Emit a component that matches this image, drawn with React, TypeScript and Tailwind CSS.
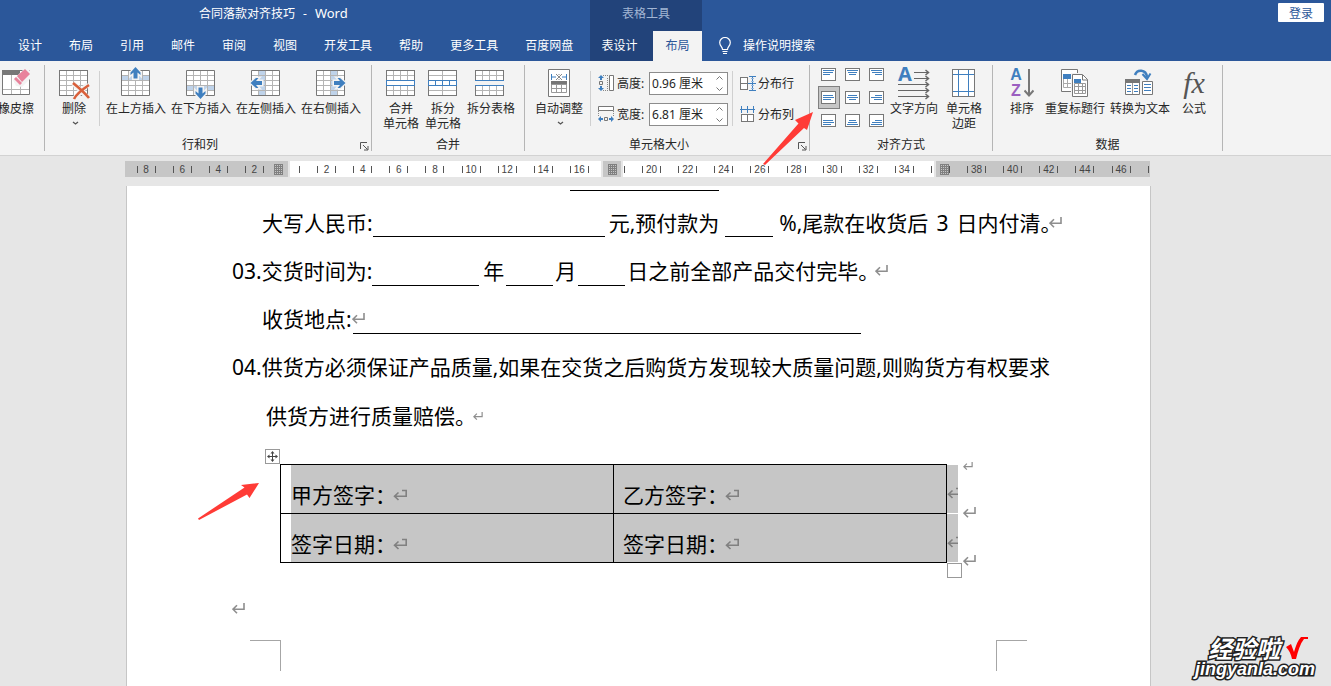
import React from "react";

const UI = "font-['Noto_Sans','Noto_Sans_CJK_SC',sans-serif]";

function Grid({ children }: { children?: React.ReactNode }) {
  return (
    <svg width="32" height="32" viewBox="1 0 32 32" fill="none" shapeRendering="crispEdges" className="overflow-visible">
      <rect x="2.5" y="3.5" width="28" height="25" fill="#fff" stroke="#777" />
      <path d="M9.5 4v24M16.5 4v24M23.5 4v24M3 8.5h27M3 13.5h27M3 18.5h27M3 23.5h27" stroke="#b4b4b4" />
      {children}
    </svg>
  );
}

const EraserIcon = () => (
  <svg width="32" height="32" viewBox="0 0 32 32" fill="none">
    <path d="M2.5 3.5h27v24h-27z" fill="#fff" stroke="#777" />
    <path d="M2 3h18v5H2z" fill="#777" />
    <path d="M11.5 8v19M20.5 16v11M3 22.5h26" stroke="#b4b4b4" />
    <path d="M13 13 26 0l8 8-12 12-6-1z" fill="#f3f3f3" />
    <path d="m17 9 8-7 5 5-8 8z" fill="#e8829b" />
    <path d="m16 10-2 2 6 6 2-2z" fill="#e8829b" />
  </svg>
);

const DeleteIcon = () => (
  <Grid>
    <g shapeRendering="auto">
      <path d="m16 16 17 17M31 17 17 32" stroke="#f3f3f3" strokeWidth="5" />
      <path d="M16 16c5 4 11 9 16 15M32 18c-6 4-12 8-15 14" stroke="#d9603b" strokeWidth="2.6" />
    </g>
  </Grid>
);

const InsertIcon = ({ dir }: { dir: "up" | "down" | "left" | "right" }) => {
  const band = { up: "M3 9h27v4H3z", down: "M3 19h27v4H3z", left: "M10 4h6v24h-6z", right: "M17 4h6v24h-6z" }[dir];
  const turn = {
    up: "translate(16.5 5.5)",
    down: "translate(16.5 26.5) rotate(180)",
    left: "translate(7 16) rotate(-90)",
    right: "translate(26 16) rotate(90)",
  }[dir];
  return (
    <svg width="32" height="32" viewBox="1 0 32 32" fill="none" className="overflow-visible">
      <path d="M2.5 3.5h28v25h-28z" fill="#fff" stroke="#777" />
      <path d={band} fill="#bfd3ea" />
      <path d="M9.5 4v24M16.5 4v24M23.5 4v24M3 8.5h27M3 13.5h27M3 18.5h27M3 23.5h27" stroke="#b4b4b4" />
      <g transform={turn}>
        <path d="M0-5 5 0v2.5L2-.5V6h-4V-.5L-5 2.500V0z" fill="#3f7fbf" stroke="#f3f3f3" strokeWidth="3" />
        <path d="M0-5.500 5 0v2.500L2 0v6h-4V0l-3 2.500V0z" fill="#3f7fbf" />
      </g>
    </svg>
  );
};

const MergeIcon = () => (
  <Grid>
    <path d="M2.5 13.5h28v5h-28z" fill="#fff" stroke="#3f7fbf" />
  </Grid>
);

const SplitCellIcon = () => (
  <svg width="32" height="32" viewBox="1 0 32 32" fill="none" shapeRendering="crispEdges">
    <path d="M2.5 3.5h28v25h-28z" fill="#fff" stroke="#777" />
    <path d="M16.5 4v24M3 8.5h27M3 23.5h27" stroke="#b4b4b4" />
    <path d="M2.5 13.5h28v5h-28zM9.5 13v5M16.5 13v5M23.5 13v5" fill="#fff" stroke="#3f7fbf" />
  </svg>
);

const SplitTableIcon = () => (
  <svg width="32" height="32" viewBox="2 0 32 32" fill="none" shapeRendering="crispEdges">
    <path d="M2.5 3.5h28v10h-28zM2.5 18.5h28v10h-28z" fill="#fff" stroke="#777" />
    <path d="M9.5 4v9M16.5 4v9M23.5 4v9M3 8.5h27M9.5 19v9M16.5 19v9M23.5 19v9M3 23.5h27" stroke="#b4b4b4" />
    <path d="M2 13.5h29M2 18.5h29" stroke="#3f7fbf" />
  </svg>
);

const AutoFitIcon = () => (
  <svg width="32" height="32" viewBox="0 0 32 32" fill="none">
    <path d="M5.5 2.5h21v27h-21z" fill="#fff" stroke="#777" />
    <path d="M8.5 7v6M23.5 7v6M9 10h4M19 10h4" stroke="#3f7fbf" />
    <path d="m13 7 6 6M19 7l-6 6M16 7v1M16 12v1" stroke="#888" />
    <path d="M8 14h16v4H8z" fill="#777" />
    <path d="M8.5 17.5h15v8h-15zM13.5 18v8M18.5 18v8M9 21.5h14" stroke="#999" />
  </svg>
);

const HeightIcon = () => (
  <svg width="17" height="17" viewBox="0 0 17 17" fill="none">
    <path d="M11.5.5h4v15h-4z" fill="#fff" stroke="#777" />
    <path d="M5 .5h6M5 15.5h6M9.5 3v11" stroke="#888" strokeDasharray="1 1" />
    <path d="M1.5 6.5h3v3h-3z" stroke="#777" />
    <path d="M3 0 6 3H4v2H2V3H0zM3 16l3-3H4v-2H2v2H0z" fill="#3f7fbf" />
  </svg>
);

const WidthIcon = () => (
  <svg width="17" height="17" viewBox="0 0 17 17" fill="none">
    <path d="M.5.5h15v4H.5z" fill="#fff" stroke="#777" />
    <path d="M.5 5v6M15.5 5v6" stroke="#888" strokeDasharray="1 1" />
    <path d="M6.5 11.5h3v3h-3z" stroke="#777" />
    <path d="m0 13 3-3v2h2v2H3v2zM16 13l-3-3v2h-2v2h2v2z" fill="#3f7fbf" />
  </svg>
);

const RowsIcon = () => (
  <svg width="17" height="17" viewBox="0 0 17 17" fill="none" shapeRendering="crispEdges">
    <path d="M.5 2.5h7v12H.5zM.5 8.5h7" fill="#fff" stroke="#777" />
    <path d="M9 1.5h7M8 8.5h8M9 15.5h7M12.5 2v13" stroke="#3f7fbf" />
    <path d="M11 3.5h3M11 6.5h3M11 10.5h3M11 13.5h3" stroke="#9bbbe0" />
  </svg>
);

const ColsIcon = () => (
  <svg width="17" height="17" viewBox="0 0 17 17" fill="none" shapeRendering="crispEdges">
    <path d="M1.5 8.5h12v7h-12zM7.5 8.5v7" fill="#fff" stroke="#777" />
    <path d="M1.5 0v7M7.5 0v7M13.5 0v7M0 3.5h15" stroke="#3f7fbf" />
  </svg>
);

const ALIGN_NAMES = [
  "靠上两端对齐", "靠上居中对齐", "靠上右对齐",
  "中部两端对齐", "水平居中", "中部右对齐",
  "靠下两端对齐", "靠下居中对齐", "靠下右对齐",
];

const ALIGN_LINES = [
  "M2 2.5h11M2 4.5h10M2 6.5h7", "M2 2.5h11M3 4.5h9M4 6.5h7", "M2 2.5h11M3 4.5h10M6 6.5h7",
  "M2 4.5h10M2 6.5h11M2 8.5h8", "M3 4.5h9M2 6.5h11M4 8.5h7", "M6 4.5h7M2 6.5h11M5 8.5h8",
  "M2 6.5h10M2 8.5h11M2 10.5h8", "M4 6.5h7M3 8.5h9M2 10.5h11", "M6 6.5h7M3 8.5h10M2 10.5h11",
];

const AlignIcon = ({ index }: { index: number }) => (
  <svg width="16" height="13" viewBox="0 0 16 13" fill="none" shapeRendering="crispEdges">
    <path d="M.5.5h14v12H.5z" fill="#fff" stroke="#777" />
    <path d={ALIGN_LINES[index]} stroke="#3f7fbf" />
  </svg>
);

const DirectionIcon = () => (
  <svg width="34" height="34" viewBox="0 0 34 34" fill="none" className="overflow-visible">
    <text x="1" y="15" fontSize="20" fontWeight="700" fill="#3f7fbf" fontFamily="Noto Sans, sans-serif">A</text>
    <path d="M17 6.5h14M17 12.5h14M1 18.5h30M1 24.5h30M1 30.5h30" stroke="#666" />
    <path d="m28.5 4 3 2.500-3 2.500M28.5 10l3 2.500-3 2.500M28.5 16l3 2.500-3 2.500M28.5 22l3 2.500-3 2.500M28.5 28l3 2.500-3 2.500" stroke="#666" strokeWidth="1.5" />
  </svg>
);

const MarginsIcon = () => (
  <svg width="32" height="32" viewBox="0 0 32 32" fill="none" shapeRendering="crispEdges">
    <path d="M4.5 2.5h22v27h-22z" fill="#fff" stroke="#777" />
    <path d="M10.5 3v26M20.5 3v26M5 7.5h21M5 24.5h21" stroke="#3f7fbf" />
  </svg>
);

const SortIcon = () => (
  <span className="flex items-center gap-0.5">
    <span className="flex w-3 flex-col items-center font-['Liberation_Sans',sans-serif] text-base font-bold leading-4">
      <span className="text-[#3f7fbf]">A</span>
      <span className="text-[#9b5fc0]">Z</span>
    </span>
    <svg width="10" height="32" viewBox="20 0 10 32" fill="none">
      <path d="M25 2v26" stroke="#777" strokeWidth="2" />
      <path d="m20.5 23.5 4.5 5 4.5-5" stroke="#777" strokeWidth="2" />
    </svg>
  </span>
);

const RepeatIcon = () => (
  <svg width="32" height="32" viewBox="0 0 32 32" fill="none">
    <path d="M2.5 2.5h16v22h-16z" fill="#fff" stroke="#777" />
    <path d="M4 7h8v5H4z" fill="#3f7fbf" />
    <path d="M4.5 12v8.5h8M4 16.5h8M8.5 12v8" stroke="#aaa" />
    <path d="M12 6h12l7 7v18H12z" fill="#f3f3f3" />
    <path d="M13.5 7.5h10l5 5v17h-15z" fill="#fff" stroke="#777" />
    <path d="M23.5 8v5h5" stroke="#777" />
    <path d="M15 12h7v4h-7z" fill="#3f7fbf" />
    <path d="M15.5 16.5h11v10h-11zM15 19.5h12M15 23.5h12M19.5 16v11M23.5 16v11" stroke="#999" />
  </svg>
);

const ConvertIcon = () => (
  <svg width="32" height="32" viewBox="1 0 32 32" fill="none">
    <path d="M2.5 13.5h14v14h-14z" fill="#fff" stroke="#777" />
    <path d="M2 12h15v4H2z" fill="#777" />
    <path d="M9.5 16v11" stroke="#999" />
    <path d="M4 18.5h4M4 21.5h4M4 24.5h4M11 18.5h4M11 21.5h4M11 24.5h4" stroke="#3f7fbf" />
    <path d="M19.5 14.5h10v13h-10z" fill="#fff" stroke="#777" />
    <path d="M21 17.5h7M21 20.5h7M21 23.5h7" stroke="#3f7fbf" />
    <path d="M12 8c2-6 11-6 12 2" stroke="#3f7fbf" strokeWidth="2.5" />
    <path d="m19.5 7 4.5 5 3.5-5.500" stroke="#3f7fbf" strokeWidth="2" />
  </svg>
);

const Caret = () => (
  <svg width="7" height="5" viewBox="0 0 7 5" fill="none" className="ml-[3px] mt-[5px]">
    <path d="m1 1 2.500 2L6 1" stroke="#555" strokeWidth="1.3" />
  </svg>
);

const Return = ({ box = false, small = false }: { box?: boolean; small?: boolean }) => (
  <svg
    width={small ? 10 : box ? 14 : 13}
    height={small ? 9 : 12}
    viewBox={box ? "0 0 14 12" : "0 0 13 12"}
    fill="none"
    aria-hidden="true"
    className="shrink-0"
  >
    {box ? (
      <path d="M5.500 3.500 1.500 7.200l4 3.800M1.500 7.200h11.700V1.500H9" stroke="#808080" strokeWidth="1.6" />
    ) : (
      <path d="M5 2.200 1 6.200l4 4M1 6.200h11V0" stroke="#8e8e8e" strokeWidth="1.6" />
    )}
  </svg>
);

type ToolProps = { icon: React.ReactNode; lines: string[]; caret?: boolean; className?: string };

const Tool = ({ icon, lines, caret, className = "" }: ToolProps) => (
  <button type="button" className={`flex shrink-0 flex-col items-center whitespace-nowrap leading-[15px] ${className}`}>
    <span className="mb-0.5 flex h-8 items-center justify-center">{icon}</span>
    {lines.map((l) => (
      <span key={l}>{l}</span>
    ))}
    {caret && <Caret />}
  </button>
);

const Launcher = () => (
  <button type="button" aria-label="对话框启动器" className="absolute bottom-0 right-0.5">
    <svg width="9" height="9" viewBox="0 0 9 9" fill="none">
      <path d="M.5 7V.5H7M3 3l4.500 4.500M8 4v4H4" stroke="#555" />
    </svg>
  </button>
);

type GroupProps = { label: string; launcher?: boolean; className: string; children: React.ReactNode };

const Group = ({ label, launcher, className, children }: GroupProps) => (
  <section className={`relative flex shrink-0 flex-col border-r border-[#b5b5b5] ${className}`}>
    <div className="flex flex-1 items-start pt-0.5">{children}</div>
    <h2 className="text-center leading-3">{label}</h2>
    {launcher && <Launcher />}
  </section>
);

const Divider = ({ className = "" }: { className?: string }) => (
  <span className={`mt-1 h-[55px] w-px shrink-0 bg-[#d0d0d0] ${className}`} />
);

const SizeField = ({ id, icon, label, value }: { id: string; icon: React.ReactNode; label: string; value: string }) => (
  <div className="flex h-[23px] items-center">
    {icon}
    <label htmlFor={id} className="ml-0.5 w-8 whitespace-nowrap">{label}</label>
    <div className="flex h-[23px] w-[79px] items-center border border-[#8c8c8c] bg-white">
      <input id={id} defaultValue={value} className="w-16 bg-transparent pl-0.5 outline-none" />
      <svg width="11" height="17" viewBox="0 0 11 17" fill="none" stroke="#777">
        <path d="m2.500 4.500 3-3 3 3M2.500 12.500l3 3 3-3" />
      </svg>
    </div>
  </div>
);

const Blank = ({ className }: { className: string }) => (
  <span className={`h-px shrink-0 bg-black ${className}`} />
);

const TABS = ["设计", "布局", "引用", "邮件", "审阅", "视图", "开发工具", "帮助", "更多工具", "百度网盘"];
const RULER = Array.from({ length: 28 }, (_, i) => i * 2 - 8);

const Dots = () => (
  <svg width="9" height="11" viewBox="0 0 9 11" shapeRendering="crispEdges">
    <path d="M.5 0v11M2.500 0v11M4.500 0v11M6.500 0v11M8.500 0v11M0 .5h9M0 2.500h9M0 4.500h9M0 6.500h9M0 8.500h9M0 10.500h9" stroke="#808080" />
  </svg>
);

const Ruler = () => (
  <div className="relative mt-[5px] flex h-4 w-full gap-0.5">
    <div className="flex w-[163px] items-center justify-end bg-[#c6c6c6] pr-[5px]"><Dots /></div>
    <div className="flex-1 bg-white" />
    <div className="flex w-[18px] items-center justify-center bg-[#c6c6c6]"><Dots /></div>
    <div className="flex-1 bg-white" />
    <div className="flex w-[214px] items-center bg-[#c6c6c6] pl-1"><Dots /></div>
    <div className="absolute inset-0 flex items-center pl-[3px] pr-[11px] pt-px font-['Liberation_Sans',sans-serif] text-[10px] leading-4 text-[#444]">
      {RULER.map((n) => (
        <div key={n} className="flex flex-1 justify-center">
          <span className="flex w-[19px] items-center justify-between">
            <i className={n === 0 || n === 18 ? "h-[7px] w-px" : "h-[7px] w-px bg-[#555]"} />
            {n !== 0 && n !== 18 && n !== 36 && <b className="font-normal">{Math.abs(n)}</b>}
            <i className="h-[7px] w-px bg-[#555]" />
          </span>
        </div>
      ))}
    </div>
    <i className="absolute right-px top-[5px] h-[7px] w-px bg-[#555]" />
  </div>
);

const Line = ({ className, children }: { className: string; children: React.ReactNode }) => (
  <p className={`flex items-center whitespace-nowrap ${className}`}>{children}</p>
);

const CELLS = [
  ["甲方签字：", "乙方签字："],
  ["签字日期：", "签字日期："],
];

const Pointers = () => (
  <svg width="640" height="420" viewBox="190 105 640 420" aria-hidden="true" className="pointer-events-none absolute left-[190px] top-[105px]">
    <path d="M813 112 795 120l3.500 3.500L763 164l2 1 39-37 3 2z" fill="#ff3b36" />
    <path d="m259 483-18 2 3.500 2.500L198 518.500l1 1.500 48-25.500 2.500 3.500z" fill="#ff3b36" />
  </svg>
);

const Watermark = () => (
  <div className="absolute bottom-2 right-4 flex flex-col items-end font-bold italic text-white [-webkit-text-stroke:3px_#222] [paint-order:stroke_fill]">
    <div className="flex items-center gap-[5px] pr-1.5">
      <span className="font-['Noto_Sans_CJK_SC',sans-serif] text-2xl leading-6">经验啦</span>
      <svg width="24" height="24" viewBox="0 0 24 24" aria-hidden="true">
        <path d="m1 11 5-3 3 8C11 9 13 4 16 1h7v2h-4C15 8 13 15 11 23H7C6 18 4 14 1 11z" fill="#f00" />
      </svg>
    </div>
    <span className="font-['Liberation_Sans',sans-serif] text-lg leading-[18px]">jingyanla.com</span>
  </div>
);

export default function App() {
  return (
    <div className={`relative flex h-screen flex-col overflow-hidden bg-[#e6e6e6] text-xs text-[#262626] ${UI}`}>
      <header className="flex h-[61px] shrink-0 bg-[#2b579a] text-white">
        <div className="flex w-[590px] shrink-0 flex-col">
          <div className="flex h-7 items-center gap-2 pl-[199px]">
            <span>合同落款对齐技巧</span>
            <span>-</span>
            <span className="text-[13px]">Word</span>
          </div>
          <nav className="mt-[3px] flex h-[29px] items-center gap-[27px] whitespace-nowrap pl-[18px]">
            {TABS.map((t) => (
              <button type="button" key={t}>{t}</button>
            ))}
          </nav>
        </div>
        <div className="flex w-28 shrink-0 flex-col bg-[#22437a]">
          <div className="flex h-7 items-center justify-center text-[#a3b6d4]">表格工具</div>
          <div className="mt-[3px] flex flex-1">
            <button type="button" className="w-[63px] pr-1">表设计</button>
            <button type="button" className="flex-1 bg-[#f3f3f3] text-[#2b579a]">布局</button>
          </div>
        </div>
        <div className="flex flex-1 flex-col">
          <div className="flex h-[31px] justify-end pr-[7px] pt-[3px]">
            <button type="button" className="h-[19px] w-[46px] rounded-[1px] bg-white pt-0.5 leading-4 text-[#2b579a]">登录</button>
          </div>
          <button type="button" className="flex h-[29px] items-center gap-3 pl-[17px]">
            <svg width="12" height="18" viewBox="0 0 12 18" fill="none" stroke="#fff">
              <path d="M3.500 12.500c0-3-2.800-3.500-2.800-7a5.300 5 0 0 1 10.600 0c0 3.500-2.800 4-2.800 7zM3.500 14.500h5M4 16.500h4" strokeWidth="1.2" />
            </svg>
            <span>操作说明搜索</span>
          </button>
        </div>
      </header>

      <div className="flex h-[95px] shrink-0 border-b border-[#d2d2d2] bg-[#f3f3f3] py-1">
        <Group label="" className="w-[45px]">
          <Tool icon={<EraserIcon />} lines={["橡皮擦"]} className="-ml-0.5" />
        </Group>
        <Group label="行和列" launcher className="w-[327px] pr-4">
          <Tool icon={<DeleteIcon />} lines={["删除"]} caret className="ml-[13px]" />
          <Divider className="ml-[9px] mr-1.5" />
          <div className="flex gap-[5px]">
            <Tool icon={<InsertIcon dir="up" />} lines={["在上方插入"]} />
            <Tool icon={<InsertIcon dir="down" />} lines={["在下方插入"]} />
            <Tool icon={<InsertIcon dir="left" />} lines={["在左侧插入"]} />
            <Tool icon={<InsertIcon dir="right" />} lines={["在右侧插入"]} />
          </div>
        </Group>
        <Group label="合并" className="w-[153px]">
          <div className="flex gap-1.5 pl-[11px]">
            <Tool icon={<MergeIcon />} lines={["合并", "单元格"]} />
            <Tool icon={<SplitCellIcon />} lines={["拆分", "单元格"]} />
            <Tool icon={<SplitTableIcon />} lines={["拆分表格"]} />
          </div>
        </Group>
        <Group label="单元格大小" launcher className="w-[285px] pr-4">
          <Tool icon={<AutoFitIcon />} lines={["自动调整"]} caret className="ml-2.5" />
          <Divider className="ml-[7px] mr-[7px]" />
          <div className="flex flex-col gap-2 pt-[5px]">
            <SizeField id="row-height" icon={<HeightIcon />} label="高度:" value="0.96 厘米" />
            <SizeField id="col-width" icon={<WidthIcon />} label="宽度:" value="6.81 厘米" />
          </div>
          <Divider className="ml-1 mr-[7px]" />
          <div className="flex flex-col gap-2 whitespace-nowrap pt-[5px]">
            <button type="button" className="flex h-[23px] items-center gap-px"><RowsIcon />分布行</button>
            <button type="button" className="flex h-[23px] items-center gap-px"><ColsIcon />分布列</button>
          </div>
        </Group>
        <Group label="对齐方式" className="w-[183px]">
          <div className="-mt-1 grid shrink-0 grid-cols-3 gap-x-0.5 pl-2">
            {ALIGN_NAMES.map((name, i) => (
              <button
                type="button"
                key={name}
                aria-label={name}
                className={
                  i === 3
                    ? "flex h-[23px] w-[22px] items-center justify-center border border-[#808080] bg-[#c6c6c6]"
                    : "flex h-[23px] w-[22px] items-center justify-center"
                }
              >
                <AlignIcon index={i} />
              </button>
            ))}
          </div>
          <Tool icon={<DirectionIcon />} lines={["文字方向"]} className="ml-0.5" />
          <Tool icon={<MarginsIcon />} lines={["单元格", "边距"]} className="ml-2" />
        </Group>
        <Group label="数据" className="w-[230px]">
          <Tool icon={<SortIcon />} lines={["排序"]} className="ml-[17px]" />
          <Tool icon={<RepeatIcon />} lines={["重复标题行"]} className="ml-[11px]" />
          <Tool icon={<ConvertIcon />} lines={["转换为文本"]} className="ml-[5px]" />
          <Tool
            icon={<i className="font-['Liberation_Serif',serif] text-[30px] leading-8 text-[#555]">fx</i>}
            lines={["公式"]}
            className="ml-3"
          />
        </Group>
      </div>

      <main className="flex min-h-0 flex-1 flex-col pl-[125px] pr-[181px]">
        <Ruler />
        <article className="relative ml-px mt-[9px] flex-1 border-l border-[#c6c6c6] bg-white text-[21px] text-black shadow-[1px_0_0_#c6c6c6]">
          <div className="flex h-[13px] pl-[443px] pt-1"><Blank className="w-[149px]" /></div>
          <Line className="h-12 pl-[135px]">
            <span>大写人民币:</span>
            <Blank className="mt-[26px] w-[232px]" />
            <span className="ml-1">元,预付款为</span>
            <Blank className="ml-1.5 mt-[26px] w-12" />
            <span className="ml-1.5">%,尾款在收货后</span>
            <span className="ml-2">3</span>
            <span className="ml-2">日内付清</span>
            <span className="w-[9px]">。</span>
            <Return />
          </Line>
          <Line className="h-12 pl-[105px]">
            <span>03.交货时间为:</span>
            <Blank className="mt-7 w-[107px]" />
            <span className="ml-1">年</span>
            <Blank className="ml-0.5 mt-7 w-[47px]" />
            <span className="ml-0.5">月</span>
            <Blank className="ml-0.5 mt-7 w-[47px]" />
            <span className="ml-0.5">日之前全部产品交付完毕</span>
            <span className="w-[17px]">。</span>
            <Return />
          </Line>
          <Line className="h-12 pl-[135px]">
            <span>收货地点:</span>
            <span className="w-px overflow-visible"><Return /></span>
            <Blank className="mt-7 w-[508px]" />
          </Line>
          <Line className="h-12 pl-[105px]">
            <span>04.供货方必须保证产品质量,如果在交货之后购货方发现较大质量问题,则购货方有权要求</span>
          </Line>
          <Line className="h-[50px] pl-[139px]">
            <span>供货方进行质量赔偿</span>
            <span className="w-[18px]">。</span>
            <Return small />
          </Line>

          <div className="ml-[138px] flex flex-col pt-2">
            <button type="button" aria-label="移动表格" className="flex h-[15px] w-[15px] items-center justify-center border border-[#999]">
              <svg width="11" height="11" viewBox="0 0 11 11" fill="none" className="shrink-0">
                <path d="M5.500 1v9M1 5.500h9" stroke="#444" />
                <path d="M5.500 0 7.500 2.500h-4zM5.500 11l-2-2.500h4zM0 5.500l2.500-2v4zM11 5.500l-2.500 2v-4z" fill="#444" />
              </svg>
            </button>
            <div className="flex pl-[15px]">
              <table className="h-[99px] w-[667px] shrink-0 table-fixed border-collapse border border-black">
                <tbody>
                  {CELLS.map((row, r) => (
                    <tr key={r}>
                      {row.map((cell, c) => (
                        <td key={c} className="h-[49px] border border-black p-0">
                          <div className={c === 0 ? "ml-2.5 flex h-12 items-center bg-[#c6c6c6] pt-3" : "flex h-12 items-center bg-[#c6c6c6] pl-[9px] pt-3"}>
                            <span className="w-[102px] whitespace-nowrap">{cell}</span>
                            <Return box />
                          </div>
                        </td>
                      ))}
                    </tr>
                  ))}
                </tbody>
              </table>
              <div className="flex w-[11px] shrink-0 flex-col gap-px pt-px">
                <span className="flex h-12 items-center overflow-hidden bg-[#c6c6c6] pt-2"><Return box /></span>
                <span className="flex h-12 items-center overflow-hidden bg-[#c6c6c6] pt-2"><Return box /></span>
              </div>
              <div className="-mt-0.5 flex h-[105px] flex-col justify-between pl-[5px]">
                <Return small />
                <Return />
                <Return />
              </div>
            </div>
            <span className="-mt-1 ml-[682px] h-[15px] w-[15px] border border-[#999] bg-white" />
          </div>
          <Line className="h-[62px] pl-[105px]"><Return /></Line>
          <div className="flex justify-between pl-[123px] pr-[123px]">
            <span className="h-[31px] w-[31px] border-r border-t border-[#a6a6a6]" />
            <span className="h-[31px] w-[31px] border-l border-t border-[#a6a6a6]" />
          </div>
        </article>
      </main>
      <Pointers />
      <Watermark />
    </div>
  );
}
